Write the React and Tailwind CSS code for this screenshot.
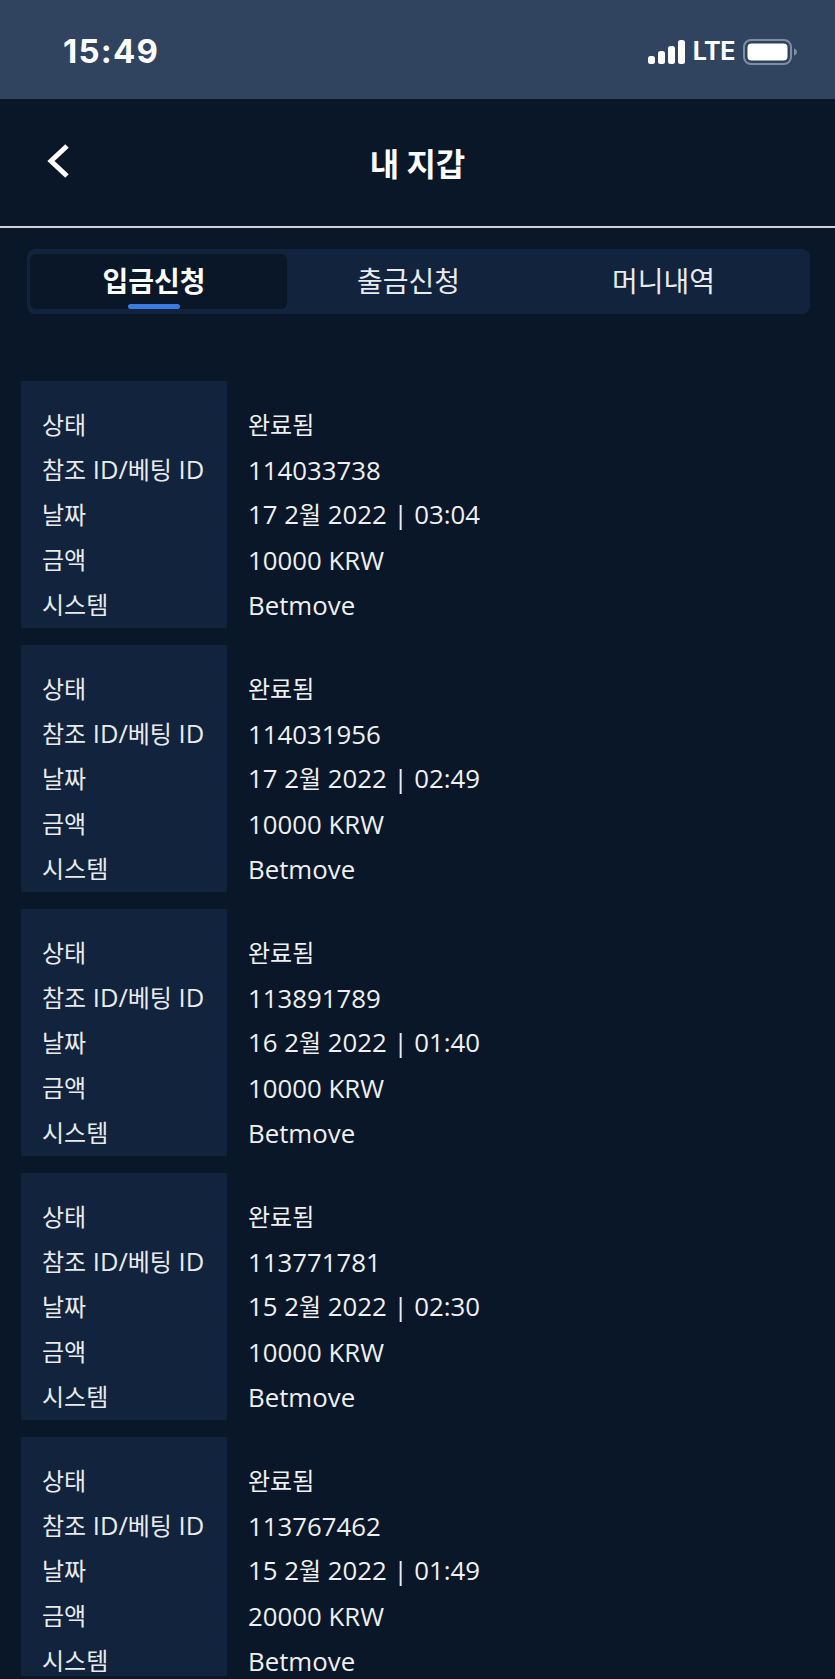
const records = [
  { id: "114033738", date: "17 2월 2022 | 03:04", amount: "10000 KRW" },
  { id: "114031956", date: "17 2월 2022 | 02:49", amount: "10000 KRW" },
  { id: "113891789", date: "16 2월 2022 | 01:40", amount: "10000 KRW" },
  { id: "113771781", date: "15 2월 2022 | 02:30", amount: "10000 KRW" },
  { id: "113767462", date: "15 2월 2022 | 01:49", amount: "20000 KRW" },
];

// Latin runs are a little larger than the Hangul ones in the reference.
function Mixed({ text }) {
  return text.split(/([가-힣]+)/).map((part, i) =>
    /[가-힣]/.test(part) ? (
      <span key={i} className="text-[24px]">{part}</span>
    ) : (
      part
    )
  );
}

function Record({ r }) {
  const rows = [
    ["상태", "완료됨"],
    ["참조 ID/베팅 ID", r.id],
    ["날짜", r.date],
    ["금액", r.amount],
    ["시스템", "Betmove"],
  ];
  return (
    <div className="flex shrink-0 h-[247px] last:h-[239px] pl-[21px]">
      <div className="w-[206px] shrink-0 bg-[#12233d] pt-[21px] pl-[21px]">
        {rows.map(([k]) => (
          <div key={k} className="h-[45px] flex items-center whitespace-pre">
            <span className="leading-[28px] text-[25.500px] text-[#e8ebee]"><Mixed text={k} /></span>
          </div>
        ))}
      </div>
      <div className="pt-[21px] pl-[21px]">
        {rows.map(([k, v]) => (
          <div key={k} className="h-[45px] flex items-center whitespace-pre">
            <span className="leading-[28px] text-[25.800px] text-[#eef0f2]"><Mixed text={v} /></span>
          </div>
        ))}
      </div>
    </div>
  );
}

export default function App() {
  return (
    <div className="font-['Open_Sans','Noto_Sans_CJK_KR',sans-serif] w-[835px] h-[1679px] overflow-hidden bg-[#0a1729] text-white flex flex-col">
      <div className="h-[99px] shrink-0 bg-[#30435f] flex items-center justify-between pl-[63px] pr-[38px]">
        <span className="font-['Inter',sans-serif] font-bold text-[33px] leading-none tracking-[1.200px] pt-[4px]">15:49</span>
        <div className="flex items-center gap-[8px] pt-[4px]">
          <svg width="37" height="24" viewBox="0 0 37 24" fill="#fff">
            <rect x="0" y="16" width="7" height="8" rx="2.500" />
            <rect x="10" y="11" width="7" height="13" rx="2.500" />
            <rect x="20" y="6" width="7" height="18" rx="2.500" />
            <rect x="30" y="0" width="7" height="24" rx="2.500" />
          </svg>
          <span className="font-['Inter',sans-serif] font-bold text-[25px] leading-none tracking-[-0.5px]">LTE</span>
          <svg width="54" height="26" viewBox="0 0 54 26" fill="none">
            <rect x="1" y="1" width="47" height="24" rx="7" stroke="#7d8ea5" strokeWidth="2" />
            <rect x="4.500" y="4.500" width="40" height="17" rx="4" fill="#fff" />
            <path d="M51 9.500c2 .5 3 2 3 3.500s-1 3-3 3.500z" fill="#7d8ea5" />
          </svg>
        </div>
      </div>
      <div className="h-[129px] shrink-0 relative flex items-center justify-center border-b-2 border-[#d0d2d4]">
        <svg className="absolute left-[44px] top-[43px]" width="28" height="40" viewBox="0 0 28 40" fill="none">
          <path d="M23 4 7 19l16 15" stroke="#fff" strokeWidth="5" />
        </svg>
        <span className="font-['Noto_Sans_CJK_KR',sans-serif] text-[32px] font-bold leading-none pb-[2px]">내 지갑</span>
      </div>
      <div className="mt-[21px] ml-[27px] w-[783px] h-[65px] shrink-0 rounded-[8px] bg-[#12233d] flex pl-[3px] py-[5px] font-['Noto_Sans_CJK_KR',sans-serif]">
        <div className="relative w-[257px] rounded-[6px] bg-[#0a1729] flex items-center justify-center pb-[4px] pr-[9px]">
          <span className="text-[28px] font-bold leading-none">입금신청</span>
          <div className="absolute bottom-0 left-[98px] w-[52px] h-[5px] rounded-[3px] bg-[#3b7be0]"></div>
        </div>
        <div className="w-[243px] flex items-center justify-center pb-[4px] text-[28px] leading-none text-[#e8ebee]">출금신청</div>
        <div className="w-[267px] flex items-center justify-center pb-[4px] text-[28px] leading-none text-[#e8ebee]">머니내역</div>
      </div>
      <div className="mt-[67px] flex flex-col gap-[17px]">
        {records.map((r) => (
          <Record key={r.id} r={r} />
        ))}
      </div>
    </div>
  );
}
